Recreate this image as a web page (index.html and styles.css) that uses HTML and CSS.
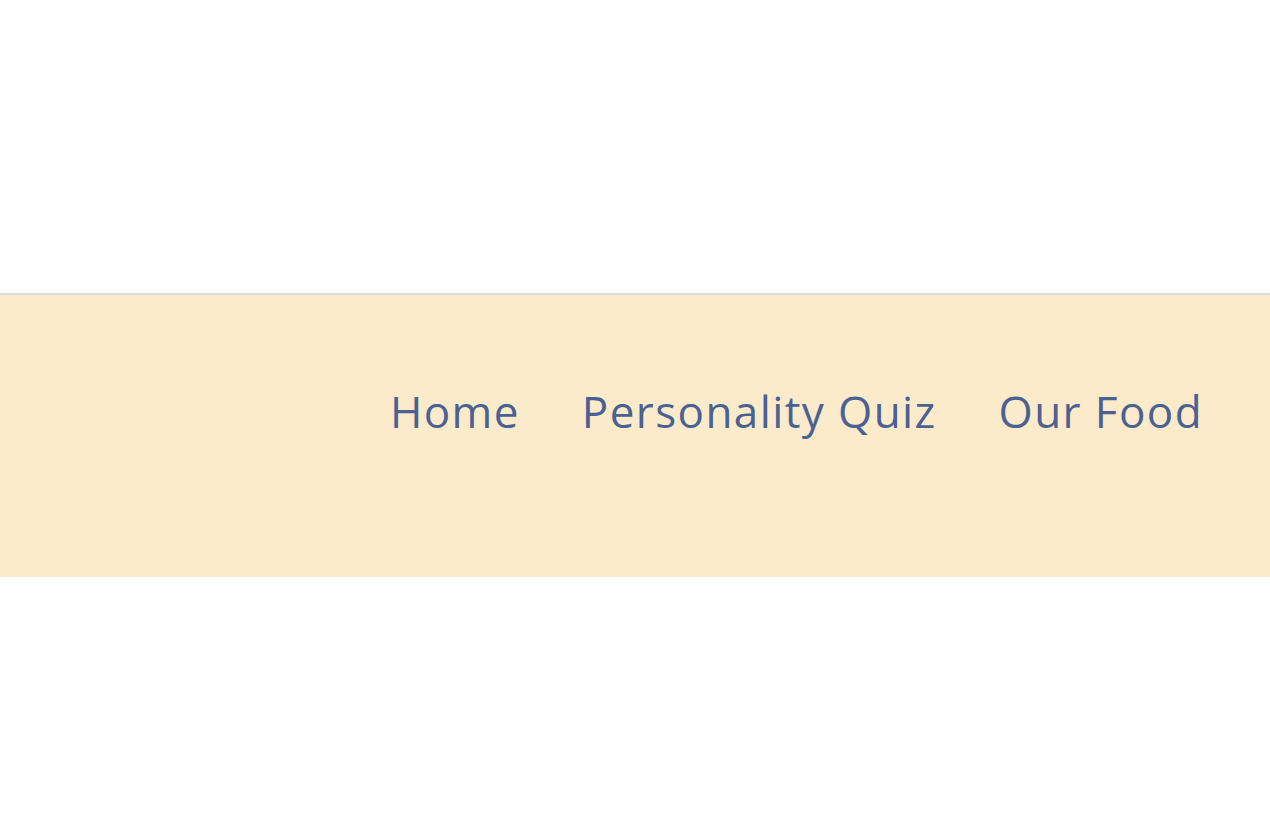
FILE: index.html
```html
<!DOCTYPE html>
<html lang="en">
<head>
<meta charset="utf-8">
<title>Nav</title>
<link rel="stylesheet" href="styles.css">
</head>
<body>
<div class="top"></div>
<header class="bar">
  <nav class="nav">
    <a class="nav-link" href="#">Home</a>
    <a class="nav-link" href="#">Personality Quiz</a>
    <a class="nav-link" href="#">Our Food</a>
  </nav>
</header>
</body>
</html>
```
FILE: styles.css
```css
html, body {
  margin: 0;
  padding: 0;
  background: #ffffff;
}
.top {
  height: 293px;
}
.bar {
  border-top: 2px solid #dddddd;
  background: #fbebca;
  height: 282px;
  display: flex;
  justify-content: flex-end;
  align-items: flex-start;
  padding-right: 67px;
}
.nav {
  display: flex;
  gap: 62px;
  margin-top: 86px;
}
.nav-link {
  font-family: "Open Sans", sans-serif;
  font-size: 44px;
  line-height: 60px;
  letter-spacing: 1.4px;
  color: #4b6191;
  text-decoration: none;
}
```
